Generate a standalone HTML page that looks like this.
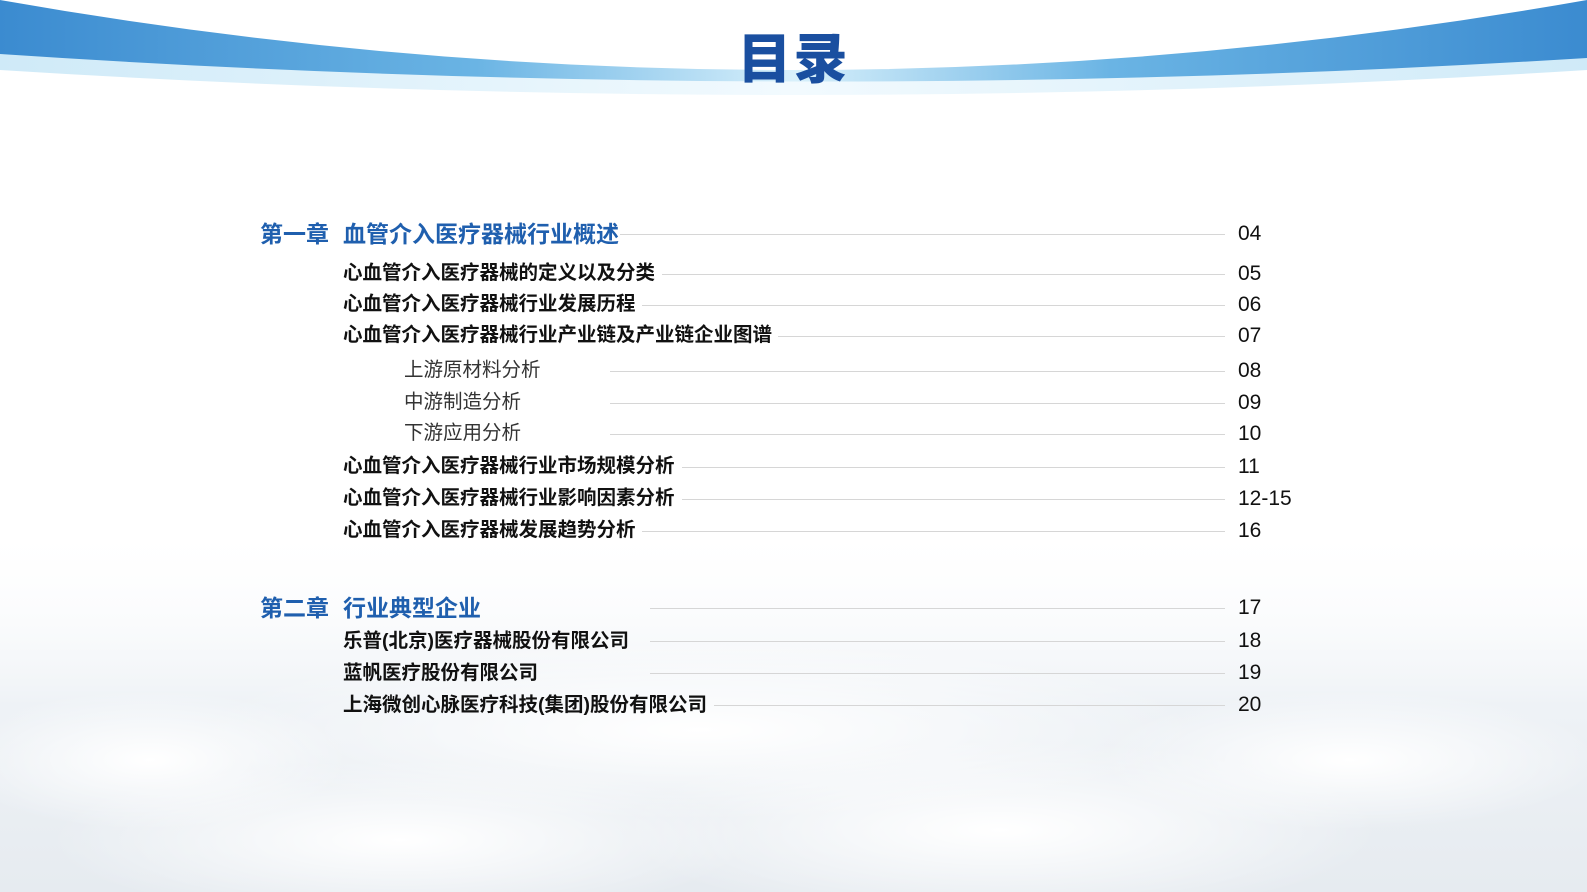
<!DOCTYPE html>
<html style="overflow:hidden"><head><meta charset="utf-8"><style>
*{margin:0;padding:0}
html,body{width:1587px;height:892px;overflow:hidden}
body{position:relative;background:#fff;font-family:"Liberation Sans","Noto Sans CJK SC",sans-serif}
.bg{position:absolute;left:0;top:0;display:block}
.t{position:absolute;left:0;width:1587px;text-align:center;top:20px;font-size:54px;line-height:70px;font-weight:900;color:#1a4fa0;letter-spacing:2px;font-family:"Noto Sans CJK SC",sans-serif}
.r{position:absolute;height:30px;line-height:30px;white-space:nowrap}
.ch{font-size:23px;font-weight:bold;color:#1f5fae;left:260px}
.ch span{margin-left:14px}
.s{font-size:19.5px;font-weight:bold;color:#111;left:343px}
.ss{font-size:19.5px;color:#333;left:404px}
.n{position:absolute;left:1238px;font-size:21px;color:#111;height:30px;line-height:30px}
.l{position:absolute;height:1px;background:#d6d6d6}
</style></head><body>
<svg class="bg" width="1587" height="892">
<defs>
<linearGradient id="b" x1="0" x2="1"><stop offset="0" stop-color="#3b8bd0"/><stop offset="0.3" stop-color="#6ab4e4"/><stop offset="0.5" stop-color="#d8f0fb"/><stop offset="0.7" stop-color="#6ab4e4"/><stop offset="1" stop-color="#3b8bd0"/></linearGradient>
<linearGradient id="c" x1="0" x2="1"><stop offset="0" stop-color="#cfeaf8"/><stop offset="0.5" stop-color="#f2fafe"/><stop offset="1" stop-color="#cfeaf8"/></linearGradient>
<linearGradient id="cl" x1="0" y1="0" x2="0" y2="1"><stop offset="0" stop-color="#fff" stop-opacity="0"/><stop offset="0.5" stop-color="#eef2f6"/><stop offset="1" stop-color="#e6ebf0"/></linearGradient>
<radialGradient id="w"><stop offset="0" stop-color="#fff"/><stop offset="1" stop-color="#fff" stop-opacity="0"/></radialGradient>
</defs>
<rect x="0" y="520" width="1587" height="372" fill="url(#cl)"/>
<ellipse cx="400" cy="840" rx="350" ry="80" fill="url(#w)"/>
<ellipse cx="1000" cy="830" rx="380" ry="90" fill="url(#w)"/>
<ellipse cx="700" cy="730" rx="500" ry="90" fill="url(#w)"/>
<ellipse cx="150" cy="760" rx="200" ry="70" fill="url(#w)"/>
<ellipse cx="1350" cy="760" rx="250" ry="70" fill="url(#w)"/>
<path d="M0,52 Q793,108 1587,56 L1587,70 Q793,120 0,70 Z" fill="url(#c)"/>
<path d="M0,0 Q793,140 1587,0 L1587,58 Q793,107 0,54 Z" fill="url(#b)"/>
</svg>
<div class="t">目录</div>

<div class="r ch" style="top:219px">第一章<span>血管介入医疗器械行业概述</span></div>
<div class="l" style="left:620px;width:605px;top:234px"></div><div class="n" style="top:219px">04</div>

<div class="r s" style="top:258px">心血管介入医疗器械的定义以及分类</div>
<div class="l" style="left:662px;width:563px;top:274px"></div><div class="n" style="top:259px">05</div>
<div class="r s" style="top:289px">心血管介入医疗器械行业发展历程</div>
<div class="l" style="left:642px;width:583px;top:305px"></div><div class="n" style="top:290px">06</div>
<div class="r s" style="top:320px">心血管介入医疗器械行业产业链及产业链企业图谱</div>
<div class="l" style="left:778px;width:447px;top:336px"></div><div class="n" style="top:321px">07</div>

<div class="r ss" style="top:355px">上游原材料分析</div>
<div class="l" style="left:610px;width:615px;top:371px"></div><div class="n" style="top:356px">08</div>
<div class="r ss" style="top:387px">中游制造分析</div>
<div class="l" style="left:610px;width:615px;top:403px"></div><div class="n" style="top:388px">09</div>
<div class="r ss" style="top:418px">下游应用分析</div>
<div class="l" style="left:610px;width:615px;top:434px"></div><div class="n" style="top:419px">10</div>

<div class="r s" style="top:451px">心血管介入医疗器械行业市场规模分析</div>
<div class="l" style="left:682px;width:543px;top:467px"></div><div class="n" style="top:452px">11</div>
<div class="r s" style="top:483px">心血管介入医疗器械行业影响因素分析</div>
<div class="l" style="left:682px;width:543px;top:499px"></div><div class="n" style="top:484px">12-15</div>
<div class="r s" style="top:515px">心血管介入医疗器械发展趋势分析</div>
<div class="l" style="left:642px;width:583px;top:531px"></div><div class="n" style="top:516px">16</div>

<div class="r ch" style="top:593px">第二章<span>行业典型企业</span></div>
<div class="l" style="left:650px;width:575px;top:608px"></div><div class="n" style="top:593px">17</div>
<div class="r s" style="top:626px">乐普(北京)医疗器械股份有限公司</div>
<div class="l" style="left:650px;width:575px;top:641px"></div><div class="n" style="top:626px">18</div>
<div class="r s" style="top:658px">蓝帆医疗股份有限公司</div>
<div class="l" style="left:650px;width:575px;top:673px"></div><div class="n" style="top:658px">19</div>
<div class="r s" style="top:690px">上海微创心脉医疗科技(集团)股份有限公司</div>
<div class="l" style="left:714px;width:511px;top:705px"></div><div class="n" style="top:690px">20</div>
</body></html>
